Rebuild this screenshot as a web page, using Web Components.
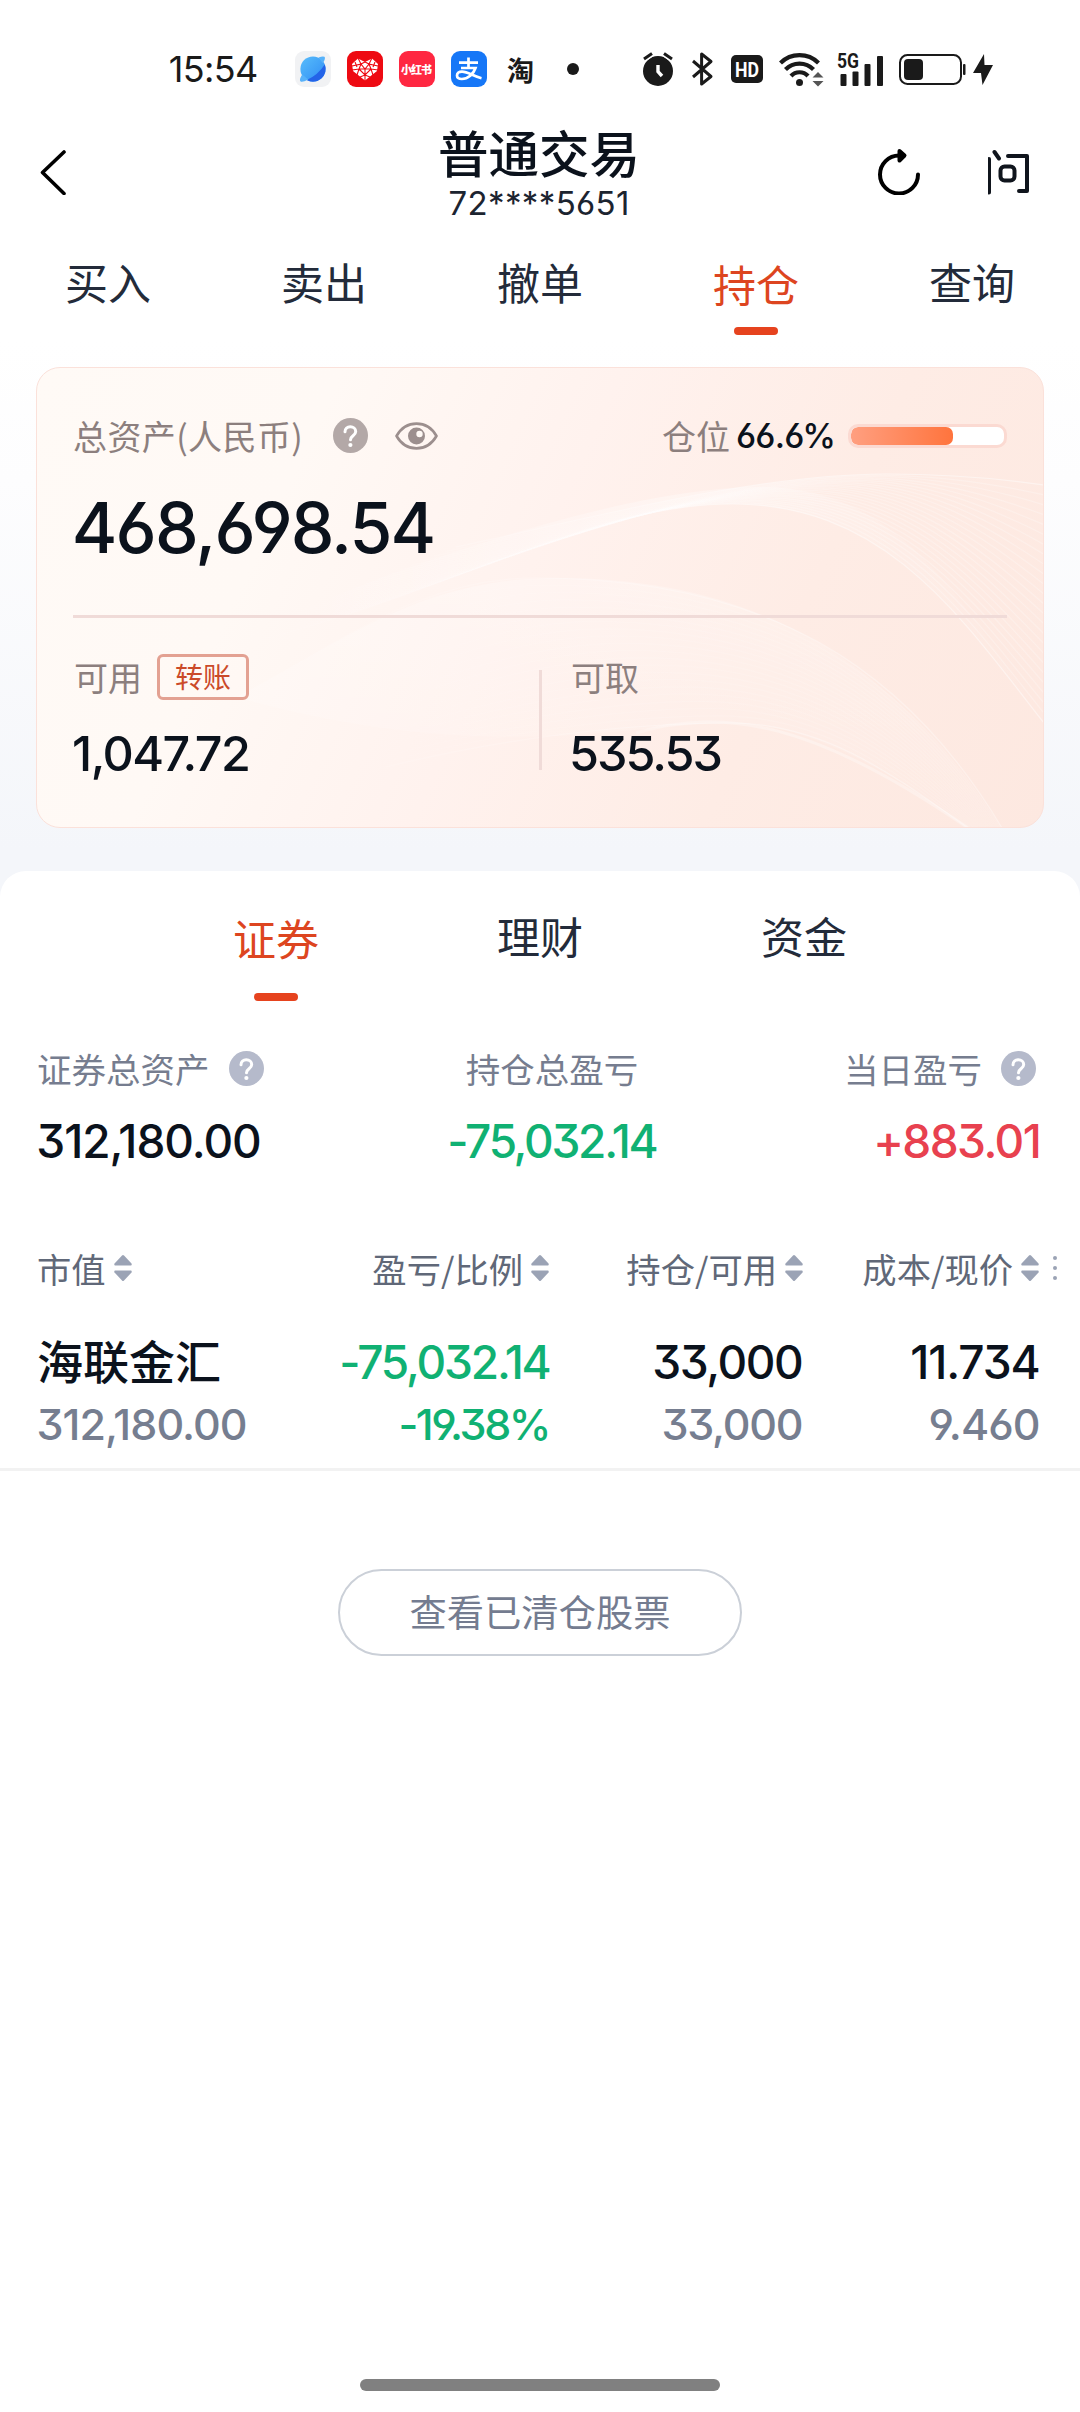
<!DOCTYPE html>
<html lang="zh-CN">
<head>
<meta charset="utf-8">
<title>普通交易</title>
<style>
  body {
    margin: 0;
    background: #fff;
    font-family: "Noto Sans CJK SC", sans-serif;
    color: #0b121c;
  }
</style>
</head>
<body>
<trade-app></trade-app>

<script>
// Small base class: every component only supplies its markup
class Base extends HTMLElement {
  connectedCallback() {
    if (this.shadowRoot) return;
    this.attachShadow({ mode: 'open' }).innerHTML = this.template();
    this.ready();
  }
  template() { return ''; }
  ready() {}
}

// --- Number with its tracking fitted to the width given in `w` ---
class FitNum extends Base {
  template() {
    return `
      <style>
        :host { display: block; width: fit-content; white-space: nowrap; font-family: Inter, sans-serif; }
        span {
          display: block; width: fit-content;
          font-feature-settings: "cv03", "cv04", "cv09";
        }
      </style>
      <span>${this.textContent.trim()}</span>`;
  }
  ready() {
    const span = this.shadowRoot.querySelector('span');
    const target = Number(this.getAttribute('w'));
    if (!target) return;
    const size = parseFloat(getComputedStyle(this).fontSize);
    const natural = span.getBoundingClientRect().width;
    const gap = (target + size * 0.12 - natural) / (span.textContent.length - 1);
    span.style.letterSpacing = gap + 'px';
    span.style.marginRight = (-gap - size * 0.06) + 'px';
    span.style.marginLeft = (-size * 0.06) + 'px';
  }
}

class HelpDot extends Base {
  template() {
    return `
      <style>
        :host { display: block; width: 35px; height: 35px; color: #b5bacb; }
        svg { display: block; }
      </style>
      <svg width="35" height="35" viewBox="0 0 35 35" fill="none">
        <circle cx="17.5" cy="17.5" r="17.5" fill="currentColor"/>
        <path d="M12 13.8c0-3.2 2.3-5 5.3-5s5.4 1.9 5.4 4.8c0 4.2-5.2 4.1-5.2 8.1" stroke="#fff" stroke-width="3" stroke-linecap="round"/>
        <circle cx="17.4" cy="27" r="2.1" fill="#fff"/>
      </svg>`;
  }
}

class SortMark extends Base {
  template() {
    return `
      <style>:host { display: block; } svg { display: block; }</style>
      <svg width="18" height="28" viewBox="0 0 18 28" fill="#9ba3b5">
        <path d="M8 1.6Q9 .6 10 1.6L17.5 9.5Q18.2 11.4 16.8 11.4H1.2Q-.2 11.4.5 9.5Z"/>
        <path d="M8 26.4Q9 27.4 10 26.4L17.5 18.5Q18.2 16.6 16.8 16.6H1.2Q-.2 16.6.5 18.5Z"/>
      </svg>`;
  }
}

// --- Status bar ---
class StatusBar extends Base {
  template() {
    return `
      <style>
        :host {
          display: flex; align-items: center; box-sizing: border-box;
          height: 110px; padding: 28px 87px 0 171px; color: #1a1a1a;
        }
        svg { display: block; flex: none; overflow: visible; }
        .time { font-size: 36px; line-height: 40px; width: 123.500px; }
        .apps { display: flex; gap: 16px; align-items: center; }
        .app {
          width: 36px; height: 36px; border-radius: 9px; overflow: hidden;
          display: flex; align-items: center; justify-content: center; color: #fff;
        }
        .sky { background: #f1f2f4; }
        .pdd { background: #ee0a12; }
        .red { background: #ff2741; font-size: 11px; font-weight: 900; letter-spacing: -1px; text-indent: -1px; white-space: nowrap; }
        .pay { background: #1677f7; }
        .tao { color: #1a1a1a; font-size: 27px; font-weight: 700; }
        .dot { width: 12px; height: 12px; border-radius: 50%; background: #1a1a1a; margin-left: 28px; }
        .sys { display: flex; align-items: center; margin-left: auto; }
      </style>
      <fit-num class="time" w="85">15:54</fit-num>
      <div class="apps">
        <div class="app sky">
          <svg width="36" height="36" viewBox="0 0 36 36">
            <defs><linearGradient id="s" x1="0" y1="0" x2="1" y2="1"><stop stop-color="#58bdfb"/><stop offset="1" stop-color="#2f8cf5"/></linearGradient></defs>
            <circle cx="18" cy="18" r="12.6" fill="url(#s)"/>
            <path d="M29.8 13.5A12.6 12.6 0 0 1 11.8 29Q23 24 29.8 13.5Z" fill="#2463e8"/>
            <path d="M23.5 6.4Q29.8 4.6 30 6.8Q30.2 9 27.8 12.3ZM7.2 23.6Q3.6 29.3 5.6 30.6Q7.8 31.4 13.3 28.6Z" fill="#57b2fa"/>
          </svg>
        </div>
        <div class="app pdd">
          <svg width="36" height="36" viewBox="0 0 36 36">
            <path d="M11 7.500L18 11L25 7.500L31 13L30 20L18 29.500L6 20L5 13Z" fill="#fff"/>
            <path d="M11 7L14 13L5 15M18 11L14 13L18 18L22 13L18 11M25 7L22 13L31 15M5 19L12 18L14 13M12 18L18 18L24 18L22 13M24 18L31 19M12 18L10 24M12 18L18 24L24 18L26 24M18 18V30M13 26L18 24L23 26M8 11L10 16M28 11L26 16" stroke="#ee0a12" stroke-width="1.1" fill="none"/>
          </svg>
        </div>
        <div class="app red">小红书</div>
        <div class="app pay">
          <svg width="36" height="36" viewBox="0 0 36 36" fill="none" stroke="#fff" stroke-width="2.700">
            <path d="M8 11.600H27M17.500 6.500V16.600M10 17H24.500C22.500 23 17 28 10.800 28C7.400 28 6 26.400 6 24.400C6 22.200 8 20.600 11 20.600C17 20.600 22 25.200 30.500 27.200"/>
          </svg>
        </div>
        <div class="app tao">淘</div>
      </div>
      <div class="dot"></div>
      <div class="sys">
        <svg width="30" height="34" viewBox="0 0 30 34" fill="none">
          <circle cx="15" cy="19" r="15" fill="#1a1a1a"/>
          <path d="M1 7L9 1.5M29 7L21 1.5" stroke="#fff" stroke-width="6"/>
          <path d="M1 7L9 1.5M29 7L21 1.5" stroke="#1a1a1a" stroke-width="3"/>
          <path d="M15 13V19.6L19 24" stroke="#fff" stroke-width="3.4"/>
        </svg>
        <svg style="margin-left:19px" width="20" height="34" viewBox="0 0 20 34" fill="none" stroke="#1a1a1a" stroke-width="3" stroke-linejoin="round">
          <path d="M1 9L19 24.5L9.6 32V2L19 9.5L1 25"/>
        </svg>
        <svg style="margin-left:19px" width="32" height="28" viewBox="0 0 32 28">
          <rect width="32" height="28" rx="5" fill="#1a1a1a"/>
          <text x="16" y="21.6" text-anchor="middle" textLength="24" lengthAdjust="spacingAndGlyphs" font-family="Roboto, sans-serif" font-weight="700" font-size="21" fill="#fff">HD</text>
        </svg>
        <svg style="margin-left:16px" width="44" height="34" viewBox="0 0 44 34" fill="none" stroke="#1a1a1a" stroke-width="4.200">
          <path d="M1.500 11A27 27 0 0 1 39.500 11M6.500 17.500A19.500 19.500 0 0 1 34.500 17.500M12 24A11.500 11.500 0 0 1 29 24"/>
          <circle cx="20.500" cy="30.500" r="3.500" fill="#1a1a1a" stroke="none"/>
          <path d="M39 20L44.500 25.500H33.500ZM39 34.500L44.500 29H33.500Z" fill="#555" stroke="none"/>
        </svg>
        <svg style="margin-left:14px" width="46" height="33" viewBox="0 0 46 33" fill="#1a1a1a">
          <text x="0" y="15" textLength="22" lengthAdjust="spacingAndGlyphs" font-family="Roboto, sans-serif" font-weight="700" font-size="20">5G</text>
          <rect x="3.500" y="21" width="6" height="12" rx="1"/><rect x="15.500" y="18.500" width="6" height="14.500" rx="1"/>
          <rect x="27.500" y="11" width="6" height="22" rx="1"/><rect x="40" y="3" width="6" height="30" rx="1"/>
        </svg>
        <svg style="margin-left:16px" width="67" height="31" viewBox="0 0 67 31">
          <rect x="1" y="1" width="61" height="29" rx="7.500" fill="none" stroke="#1a1a1a" stroke-width="2"/>
          <rect x="5" y="5" width="19" height="21" rx="4" fill="#1a1a1a"/>
          <rect x="64" y="10" width="2.500" height="11" rx="1" fill="#1a1a1a"/>
        </svg>
        <svg style="margin-left:7px" width="20" height="31" viewBox="0 0 20 31" fill="#1a1a1a"><path d="M11 0L0 19H8L9.500 31L20 11H11.500Z"/></svg>
      </div>`;
  }
}

// --- Page header ---
class PageHeader extends Base {
  template() {
    return `
      <style>
        :host { display: flex; align-items: center; justify-content: space-between; box-sizing: border-box; height: 124px; padding: 0 50px 0 40px; }
        svg { display: block; }
        .side { width: 152px; display: flex; justify-content: space-between; }
        .back { width: 160px; }
        .mid { align-self: flex-start; padding-top: 13px; text-align: center; }
        h1 { margin: 0; font-size: 50.500px; line-height: 56px; font-weight: 500; }
        .acct { font-size: 33px; line-height: 40px; margin: 4px auto 0; color: #1c2430; font-weight: 400; }
      </style>
      <div class="side back">
        <svg width="26" height="46" viewBox="0 0 26 46" fill="none" stroke="#000" stroke-width="3.600" stroke-linecap="round" stroke-linejoin="round"><path d="M24 3L2.500 23.500L24 44.500"/></svg>
      </div>
      <div class="mid">
        <h1>普通交易</h1>
        <fit-num class="acct" w="177">72****5651</fit-num>
      </div>
      <div class="side">
        <svg width="42" height="46" viewBox="0 0 42 46" fill="none" stroke="#000" stroke-width="4" stroke-linecap="round" stroke-linejoin="round">
          <path d="M40 25.500A19 19 0 1 1 21 6.500H26"/><path d="M21.500 2L26.500 6.500L21.500 11.500Z" fill="#000"/>
        </svg>
        <svg width="42" height="46" viewBox="0 0 42 46" fill="none" stroke="#10151d" stroke-width="4" stroke-linecap="round" stroke-linejoin="round">
          <path d="M1 10V43.500M6.500 3L11 9.500M20 7H39V42H31"/><rect x="12.500" y="17.500" width="14" height="14" rx="4"/>
        </svg>
      </div>`;
  }
}

// --- Tab strip: items="a,b,c" active="index" ---
class TabStrip extends Base {
  template() {
    const active = Number(this.getAttribute('active'));
    const items = this.getAttribute('items').split(',');
    return `
      <style>
        :host { display: flex; color: #232b3a; font-size: 43px; line-height: 50px; }
        div { flex: 1; text-align: center; margin-top: -1px; }
        .on { color: #dd4520; padding-top: 2px; }
        .on::after {
          content: ""; display: block; width: 44px; height: 8px; border-radius: 4px;
          margin: var(--bar-gap, 19px) auto 0; background: #e6431e;
        }
      </style>
      ${items.map((t, i) => `<div class="${i === active ? 'on' : ''}">${t}</div>`).join('')}`;
  }
}

// --- Asset card ---
class WaveArt extends Base {
  template() {
    return `
      <style>:host { display: block; } svg { display: block; }</style>
      <svg width="1008" height="461" viewBox="0 0 1008 461" fill="none">
        <defs>
          <linearGradient id="fade" gradientUnits="userSpaceOnUse" x1="150" y1="0" x2="750" y2="0"><stop stop-color="#fff" stop-opacity="0"/><stop offset="1" stop-color="#fff"/></linearGradient>
          <linearGradient id="glow" gradientUnits="userSpaceOnUse" x1="250" y1="0" x2="1008" y2="0"><stop stop-color="#fff" stop-opacity="0"/><stop offset=".5" stop-color="#fff" stop-opacity=".32"/><stop offset="1" stop-color="#fff" stop-opacity="0"/></linearGradient>
          <linearGradient id="low" gradientUnits="userSpaceOnUse" x1="0" y1="210" x2="0" y2="461"><stop stop-color="#fff" stop-opacity=".25"/><stop offset="1" stop-color="#fff" stop-opacity=".04"/></linearGradient>
        </defs>
        <path d="M150 290C400 240 540 137 697 137C850 137 925 250 1008 356C925 230 860 117 720 120C600 122 400 180 150 290Z" fill="url(#glow)"/>
        <path d="M200 330C300 280 380 211 520 211C730 211 860 300 966 461H932C860 410 780 356 693 356C600 356 450 400 200 330Z" fill="url(#low)"/>
        <g class="lines" stroke="url(#fade)" stroke-width="1.200"></g>
      </svg>`;
  }
  ready() {
    const fans = [
      // from the bright ridge up to the shallow upper right arc
      [[150, 290, 400, 240, 540, 137, 697, 137, 850, 137, 925, 250, 1008, 356], [420, 180, 560, 150, 720, 107, 850, 107, 900, 107, 960, 111, 1008, 118], 24, 0.24],
      // lower sweep
      [[200, 330, 300, 280, 380, 211, 500, 211, 730, 211, 870, 300, 966, 461], [350, 400, 470, 370, 600, 356, 693, 356, 790, 356, 860, 410, 932, 461], 20, 0.12]
    ];
    let out = '';
    for (const [a, b, n, alpha] of fans) {
      for (let i = 0; i <= n; i++) {
        const p = a.map((v, k) => (v + (b[k] - v) * i / n).toFixed(1));
        out += `<path d="M${p[0]} ${p[1]}C${p.slice(2, 8).join(' ')} ${p.slice(8).join(' ')}" stroke-opacity="${i === 0 || i === n ? alpha + 0.2 : alpha}"/>`;
      }
    }
    // bright lower crest
    out += '<path d="M600 366C690 340 780 356 932 461" stroke-width="3" stroke-opacity=".3"/>';
    this.shadowRoot.querySelector('.lines').innerHTML = out;
  }
}

class AssetCard extends Base {
  template() {
    return `
      <style>
        :host {
          display: block; position: relative; box-sizing: border-box; height: 461px; margin: 27px 36px 0;
          border: 1px solid #fbe1da; border-radius: 24px; overflow: hidden; padding: 0 36px; color: #0b121c;
          background: linear-gradient(115deg, #fffaf6 0%, #fff9f5 25%, #fff2ee 48%, #feece5 72%, #fde8e0 100%);
        }
        wave-art { position: absolute; inset: -1px; }
        .body { position: relative; }
        .row { display: flex; align-items: center; }
        .head { height: 35px; padding: 50px 1px 0; font-size: 34px; line-height: 40px; }
        .label { color: #8c7f7e; font-size: 34px; line-height: 40px; margin-left: -1px; }
        .head .label:first-child { letter-spacing: .4px; }
        .head help-dot { margin-left: 30px; color: #b3a8a7; }
        .eye { margin-left: 27px; }
        .head .pos { margin-left: auto; margin-right: 8px; }
        .pct { font-weight: 500; }
        .meter {
          box-sizing: border-box; width: 159px; height: 24px; margin-left: 14px;
          border: 3px solid #fbdad2; border-radius: 10px; background: #fff; overflow: hidden; margin-right: -1px;
        }
        .meter i { display: block; width: 102px; height: 100%; border-radius: 7px; background: linear-gradient(90deg, #ff9f80, #ff743d); }
        .total { font-size: 69.500px; line-height: 70px; margin: 40px 2px 0 3px; font-weight: 500; }
        hr { border: 0; height: 3px; margin: 52px 0 0; background: #f0dbd8; }
        .split { display: grid; grid-template-columns: 466px 3px 1fr; padding-top: 36px; }
        .bar { background: #f0dbd8; height: 100px; margin-top: 16px; }
        .cell { padding-left: 2px; }
        .cell:last-child { padding-left: 30px; }
        .cell .row { height: 46px; }
        .cell fit-num { font-size: 48.500px; line-height: 50px; margin-top: 29px; font-weight: 500; }
        .transfer {
          box-sizing: border-box; width: 92px; height: 46px; margin-left: 15px; border: 3px solid #e3a192; border-radius: 6px;
          color: #cb4a29; font-size: 28px; line-height: 38px; text-align: center; white-space: nowrap;
        }
      </style>
      <wave-art></wave-art>
      <div class="body">
        <div class="row head">
          <span class="label">总资产(人民币)</span>
          <help-dot></help-dot>
          <svg class="eye" width="43" height="28" viewBox="0 0 43 28" fill="none">
            <path d="M1.500 14C11 -2.500 32 -2.500 41.500 14C32 30.500 11 30.500 1.500 14Z" stroke="#9c8f8e" stroke-width="2.600" stroke-linejoin="round"/>
            <circle cx="21.500" cy="14" r="8.500" fill="#9c8f8e"/><circle cx="24.500" cy="12" r="3.200" fill="#fff9f5"/>
          </svg>
          <span class="label pos">仓位</span>
          <fit-num class="pct" w="96">66.6%</fit-num>
          <div class="meter"><i></i></div>
        </div>
        <fit-num class="total" w="356">468,698.54</fit-num>
        <hr>
        <div class="split">
          <div class="cell">
            <div class="row"><span class="label">可用</span><span class="transfer">转账</span></div>
            <fit-num w="173">1,047.72</fit-num>
          </div>
          <div class="bar"></div>
          <div class="cell">
            <div class="row"><span class="label">可取</span></div>
            <fit-num w="148">535.53</fit-num>
          </div>
        </div>
      </div>`;
  }
}

// --- Summary of the securities account ---
class SummaryCell extends Base {
  template() {
    return `
      <style>
        :host { display: flex; flex-direction: column; align-items: var(--align, flex-start); }
        .label { display: flex; align-items: center; gap: 19px; height: 40px; margin: 0 var(--inset, 0) 0 -2px; font-size: 34.500px; line-height: 40px; color: #767d8f; }
        .value { font-size: 46px; line-height: 50px; margin-top: 28px; font-weight: 500; color: var(--tone, #0b121c); }
      </style>
      <div class="label">${this.getAttribute('label')}${this.hasAttribute('help') ? '<help-dot></help-dot>' : ''}</div>
      <div class="value"><slot></slot></div>`;
  }
}

// --- Holdings table ---
class HoldingsTable extends Base {
  template() {
    const heads = ['市值', '盈亏/比例', '持仓/可用', '成本/现价'];
    return `
      <style>
        :host { display: block; }
        .line { display: grid; grid-template-columns: 210px 300px 254px 236px 41px; padding-left: 39px; }
        .head { height: 40px; font-size: 34.300px; line-height: 40px; color: #606878; }
        .head div { display: flex; align-items: center; justify-content: flex-end; gap: 8px; white-space: nowrap; }
        .head div:first-child { justify-content: flex-start; margin-left: -2px; }
        .head .more { justify-content: flex-start; padding-left: 14px; }
        .item { padding-top: 49px; padding-bottom: 19px; border-bottom: 3px solid #f2f2f2; }
        .item div { display: flex; flex-direction: column; align-items: flex-end; gap: 12px; padding-right: 1px; }
        .item div:first-child { align-items: flex-start; }
        .name, .big { font-size: 46px; line-height: 50px; font-weight: 500; }
        .name { white-space: nowrap; margin: -3px 0 3px -2px; font-weight: 500; }
        .small { font-size: 43px; line-height: 50px; color: #767e90; font-weight: 500; }
        .down .big, .down .small { color: #10b173; }
        .item .qty { padding-right: 2px; }
        .item .down { padding-right: 0; }
      </style>
      <div class="line head">
        ${heads.map(h => `<div><span>${h}</span><sort-mark></sort-mark></div>`).join('')}
        <div class="more"><svg width="4" height="26" viewBox="0 0 4 26" fill="#9ba3b5"><circle cx="2" cy="3" r="2"/><circle cx="2" cy="13" r="2"/><circle cx="2" cy="23" r="2"/></svg></div>
      </div>
      <div class="line item">
        <div><span class="name">海联金汇</span><fit-num class="small" w="206">312,180.00</fit-num></div>
        <div class="down"><fit-num class="big" w="207">-75,032.14</fit-num><fit-num class="small" w="148">-19.38%</fit-num></div>
        <div class="qty"><fit-num class="big" w="146">33,000</fit-num><fit-num class="small" w="137">33,000</fit-num></div>
        <div><fit-num class="big" w="125">11.734</fit-num><fit-num class="small" w="107">9.460</fit-num></div>
      </div>`;
  }
}

class PillButton extends Base {
  template() {
    return `
      <style>
        :host {
          display: block; box-sizing: border-box; width: 404px; height: 87px; margin: 98px auto 0;
          border: 2px solid #cbd0d8; border-radius: 44px; text-align: center;
          font-size: 37.300px; line-height: 81px; color: #747c90;
        }
      </style>
      <slot></slot>`;
  }
}

class TradeApp extends Base {
  template() {
    return `
      <style>
        :host {
          display: flex; flex-direction: column; width: 1080px; height: 2412px; overflow: hidden;
          background: linear-gradient(180deg, #fff 340px, #fdfdfe 480px, #f4f6fa 850px);
        }
        .main-tabs { height: 83px; padding-top: 23px; }
        .sheet {
          flex: 1; display: flex; flex-direction: column; margin-top: 43px;
          background: #fff; border-radius: 26px 26px 0 0;
        }
        .sub-tabs { --bar-gap: 31px; height: 137px; padding: 40px 144px 0; }
        .summary { display: grid; grid-template-columns: 1fr 1fr 1fr; padding: 0 41px 0 39px; height: 119px; margin-bottom: 81px; }
        .home { width: 360px; height: 12px; border-radius: 6px; background: #808080; margin: auto auto 21px; }
      </style>
      <status-bar></status-bar>
      <page-header></page-header>
      <tab-strip class="main-tabs" items="买入,卖出,撤单,持仓,查询" active="3"></tab-strip>
      <asset-card></asset-card>
      <section class="sheet">
        <tab-strip class="sub-tabs" items="证券,理财,资金" active="0"></tab-strip>
        <div class="summary">
          <summary-cell label="证券总资产" help><fit-num w="220">312,180.00</fit-num></summary-cell>
          <summary-cell label="持仓总盈亏" style="--align: center; --tone: #10b173; margin-left: 28px"><fit-num w="206">-75,032.14</fit-num></summary-cell>
          <summary-cell label="当日盈亏" help style="--align: flex-end; --inset: 3px; --tone: #e8414f"><fit-num w="163">+883.01</fit-num></summary-cell>
        </div>
        <holdings-table></holdings-table>
        <pill-button>查看已清仓股票</pill-button>
        <div class="home"></div>
      </section>`;
  }
}

customElements.define('fit-num', FitNum);
customElements.define('help-dot', HelpDot);
customElements.define('sort-mark', SortMark);
customElements.define('status-bar', StatusBar);
customElements.define('page-header', PageHeader);
customElements.define('tab-strip', TabStrip);
customElements.define('wave-art', WaveArt);
customElements.define('asset-card', AssetCard);
customElements.define('summary-cell', SummaryCell);
customElements.define('holdings-table', HoldingsTable);
customElements.define('pill-button', PillButton);
customElements.define('trade-app', TradeApp);
</script>
</body>
</html>
